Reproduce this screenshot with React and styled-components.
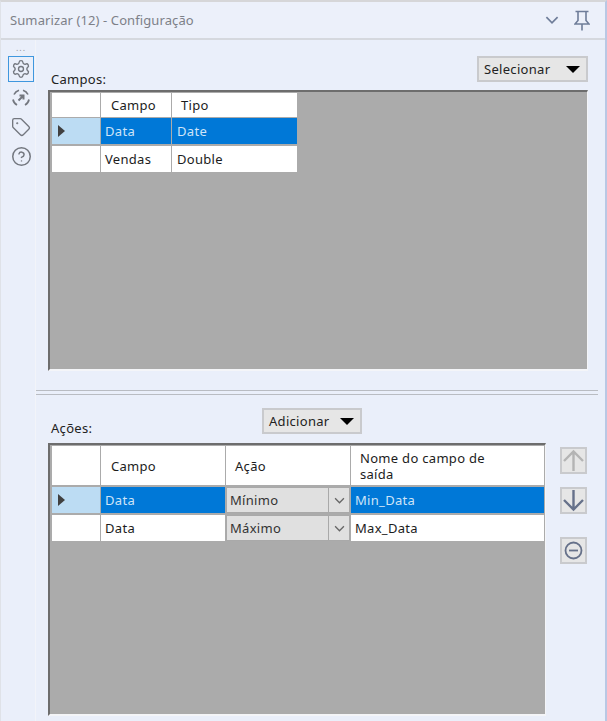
import React from "react";
import styled, { createGlobalStyle } from "styled-components";
import { Settings, Tag as TagIcon, CircleHelp } from "lucide-react";

const Global = createGlobalStyle`
  html, body { margin: 0; padding: 0; background: #eaeffa; }
  body { font-family: "Noto Sans", "Open Sans", sans-serif; font-size: 13px; letter-spacing: 0.3px; color: #1c1c1c; }
  #root { width: 607px; height: 721px; overflow: hidden; }
`;

const Page = styled.div`
  width: 607px; height: 721px; box-sizing: border-box;
  display: flex; flex-direction: column;
  background: #eaeffa;
  border-top: 2px solid #d6d6d8;
  border-left: 1px solid #dfe2e8;
  border-right: 2px solid #b9c8e4;
`;
const TitleBar = styled.header`
  height: 38px; box-sizing: border-box; flex: none;
  display: flex; align-items: center; justify-content: space-between;
  padding: 0 15px 0 9px;
  border-bottom: 2px solid #d5d8de;
  background: #ecf0fa;
`;
const Title = styled.div`
  font-size: 13px; color: #7d8088; letter-spacing: 0.1px;
`;
const TitleIcons = styled.div`
  display: flex; align-items: center; gap: 15px; color: #6f7d99;
`;
const Body = styled.div`
  flex: 1; min-height: 0; display: flex;
`;
const Rail = styled.nav`
  width: 35px; flex: none; box-sizing: border-box;
  border-right: 1px solid #f2f4f9;
  display: flex; flex-direction: column; align-items: center;
  padding: 4px 0 0 6px;
  color: #73777f;
`;
const Dots = styled.div`
  height: 12px; font-size: 9px; line-height: 7px; letter-spacing: 1px; color: #9a9a9a;
`;
const RailButton = styled.div`
  width: 26px; height: 26px; box-sizing: border-box; margin-bottom: 3px;
  display: flex; align-items: center; justify-content: center;
  border: 1px solid ${p => (p.$active ? "#3f97de" : "transparent")};
`;
const Content = styled.main`
  flex: 1; min-width: 0; display: flex; flex-direction: column;
`;
const FieldsPanel = styled.section`
  padding: 16px 17px 0 12px; display: flex; flex-direction: column;
`;
const PanelHead = styled.div`
  height: 34px; display: flex; align-items: flex-start; justify-content: space-between;
`;
const PanelLabel = styled.label`
  color: #222; align-self: flex-end; margin: 0 0 2px 3px; line-height: 18px;
`;
const DropButton = styled.button`
  width: ${p => p.$w}px; height: 26px; box-sizing: border-box; padding: 0 6px 0 5px;
  display: flex; align-items: center; justify-content: space-between;
  font: inherit; letter-spacing: inherit; color: #222;
  background: #e6e6e6; border: 2px solid #c9cacd; border-radius: 0;
`;
const Arrow = styled.span`
  width: 0; height: 0;
  border-left: 7px solid transparent; border-right: 7px solid transparent;
  border-top: 7px solid #000;
`;
const GridFrame = styled.div`
  box-sizing: border-box; width: ${p => p.$w}px; height: ${p => p.$h}px;
  background: #ababab; padding: 1px 0 0 2px; flex: none;
  border-top: 2px solid #6d6d6d; border-left: 2px solid #6d6d6d;
  border-right: 1px solid #f4f5f8; border-bottom: 2px solid #f4f5f8;
`;
const Row = styled.div`
  display: grid; grid-template-columns: ${p => p.$cols}; height: ${p => p.$h}px;
  column-gap: 1px; margin-bottom: ${p => p.$gap}px; width: max-content;
`;
const Cell = styled.div`
  box-sizing: border-box; display: flex; align-items: center;
  padding-left: ${p => p.$pad ?? 4}px; line-height: 16px;
  background: ${p => (p.$sel ? "#0078d7" : "#fff")};
  color: ${p => (p.$sel ? "#cfe4f8" : "#1c1c1c")};
`;
const RowHead = styled.div`
  display: flex; align-items: center; padding-left: 6px; box-sizing: border-box;
  background: ${p => (p.$cur ? "#bcdcf3" : "#fff")};
`;
const Marker = styled.span`
  width: 0; height: 0;
  border-top: 6px solid transparent; border-bottom: 6px solid transparent;
  border-left: 7px solid #404040;
`;
const Combo = styled.div`
  display: grid; grid-template-columns: 1fr 20px; column-gap: 1px;
  background: #a9a9a9; box-sizing: border-box; padding: 1px;
  color: #333;
`;
const ComboText = styled.div`
  background: #e0e0e0; display: flex; align-items: center; padding-left: 3px;
`;
const ComboArrow = styled.div`
  background: #e0e0e0; display: flex; align-items: center; justify-content: center; color: #666;
`;
const Divider = styled.div`
  height: 3px; flex: none; margin: 19px 7px 0 0;
  border-top: 1px solid #b9bcc2; border-bottom: 1px solid #b9bcc2;
`;
const ActionsPanel = styled.section`
  padding: 13px 17px 0 12px; display: flex; flex-direction: column;
`;
const ActionsHead = styled.div`
  height: 35px; display: flex; align-items: flex-start;
`;
const ActionsLabel = styled(PanelLabel)`
  width: 211px; flex: none; margin-bottom: 6px;
`;
const ActionsBody = styled.div`
  display: flex; gap: 14px; align-items: flex-start;
`;
const SideButtons = styled.div`
  display: flex; flex-direction: column; padding-top: 4px;
`;
const SideButton = styled.div`
  width: 27px; height: 27px; box-sizing: border-box; flex: none;
  display: flex; align-items: center; justify-content: center;
  background: #e6e6e6; border: 2px solid #c9cacd;
  margin-bottom: ${p => p.$gap}px; color: ${p => (p.$off ? "#b4b4b4" : "#66718a")};
`;

const Chevron = ({ size = 9 }) => (
  <svg width={size} height={size} viewBox="0 0 10 10" fill="none" stroke="currentColor" strokeWidth="1.2">
    <path d="M1 3l4 4 4-4" />
  </svg>
);

const Pin = () => (
  <svg width="16" height="21" viewBox="0 0 16 21" fill="none" stroke="currentColor" strokeWidth="1.6">
    <path d="M1.500 1.500h13M4 1.500v9L1 14h14l-3-3.500v-9M8 14v6.500" />
  </svg>
);

const Cycle = () => (
  <svg width="20" height="20" viewBox="0 0 20 20" fill="none" stroke="currentColor" strokeWidth="1.7">
    <path d="M3 6.500A8 8 0 0 1 8 2.200M12 2.200a8 8 0 0 1 5 4.300M18 11.500a8 8 0 0 1-4 5.500M6 17a8 8 0 0 1-4-5.500" />
    <path d="M7.500 12.500L12.500 7.500M8.500 7.500h4v4" strokeWidth="2" />
  </svg>
);

const ArrowUp = () => (
  <svg width="23" height="23" viewBox="0 0 23 23" fill="none" stroke="currentColor" strokeWidth="2.400">
    <path d="M11.500 22V3M2 12l9.500-9.500L21 12" />
  </svg>
);
const ArrowDown = () => (
  <svg width="23" height="23" viewBox="0 0 23 23" fill="none" stroke="currentColor" strokeWidth="2.400">
    <path d="M11.500 1v19M2 11l9.500 9.500L21 11" />
  </svg>
);
const Minus = () => (
  <svg width="19" height="19" viewBox="0 0 19 19" fill="none" stroke="currentColor" strokeWidth="1.800">
    <circle cx="9.500" cy="9.500" r="8" />
    <path d="M5 9.500h9" />
  </svg>
);

const fieldCols = "48px 70px 125px";
const actionCols = "48px 124px 124px 193px";

const fields = [
  { name: "Data", type: "Date", sel: true },
  { name: "Vendas", type: "Double" },
];
const actions = [
  { name: "Data", act: "Mínimo", out: "Min_Data", sel: true },
  { name: "Data", act: "Máximo", out: "Max_Data" },
];

export default function App() {
  return (
    <Page>
      <Global />
      <TitleBar>
        <Title>Sumarizar (12) - Configuração</Title>
        <TitleIcons>
          <Chevron size={14} />
          <Pin />
        </TitleIcons>
      </TitleBar>
      <Body>
        <Rail>
          <Dots>...</Dots>
          <RailButton $active><Settings size={20} strokeWidth={1.6} /></RailButton>
          <RailButton><Cycle /></RailButton>
          <RailButton><TagIcon size={20} strokeWidth={1.6} /></RailButton>
          <RailButton><CircleHelp size={21} strokeWidth={1.7} /></RailButton>
        </Rail>
        <Content>
          <FieldsPanel>
            <PanelHead>
              <PanelLabel>Campos:</PanelLabel>
              <DropButton $w={111}>Selecionar <Arrow /></DropButton>
            </PanelHead>
            <GridFrame $w={540} $h={281}>
              <Row $cols={fieldCols} $h={24} $gap={1}>
                <RowHead />
                <Cell $pad={10}>Campo</Cell>
                <Cell $pad={9}>Tipo</Cell>
              </Row>
              {fields.map(f => (
                <Row key={f.name} $cols={fieldCols} $h={26} $gap={2}>
                  <RowHead $cur={f.sel}>{f.sel && <Marker />}</RowHead>
                  <Cell $sel={f.sel}>{f.name}</Cell>
                  <Cell $sel={f.sel} $pad={5}>{f.type}</Cell>
                </Row>
              ))}
            </GridFrame>
          </FieldsPanel>
          <Divider />
          <ActionsPanel>
            <ActionsHead>
              <ActionsLabel>Ações:</ActionsLabel>
              <DropButton $w={100}>Adicionar <Arrow /></DropButton>
            </ActionsHead>
            <ActionsBody>
              <GridFrame $w={498} $h={273}>
                <Row $cols={actionCols} $h={39} $gap={2}>
                  <RowHead />
                  <Cell $pad={10}>Campo</Cell>
                  <Cell $pad={9}>Ação</Cell>
                  <Cell $pad={9}><span>Nome do campo de<br />saída</span></Cell>
                </Row>
                {actions.map(a => (
                  <Row key={a.act} $cols={actionCols} $h={26} $gap={2}>
                    <RowHead $cur={a.sel}>{a.sel && <Marker />}</RowHead>
                    <Cell $sel={a.sel}>{a.name}</Cell>
                    <Combo>
                      <ComboText>{a.act}</ComboText>
                      <ComboArrow><Chevron size={11} /></ComboArrow>
                    </Combo>
                    <Cell $sel={a.sel}>{a.out}</Cell>
                  </Row>
                ))}
              </GridFrame>
              <SideButtons>
                <SideButton $off $gap={13}><ArrowUp /></SideButton>
                <SideButton $gap={23}><ArrowDown /></SideButton>
                <SideButton $gap={0}><Minus /></SideButton>
              </SideButtons>
            </ActionsBody>
          </ActionsPanel>
        </Content>
      </Body>
    </Page>
  );
}
